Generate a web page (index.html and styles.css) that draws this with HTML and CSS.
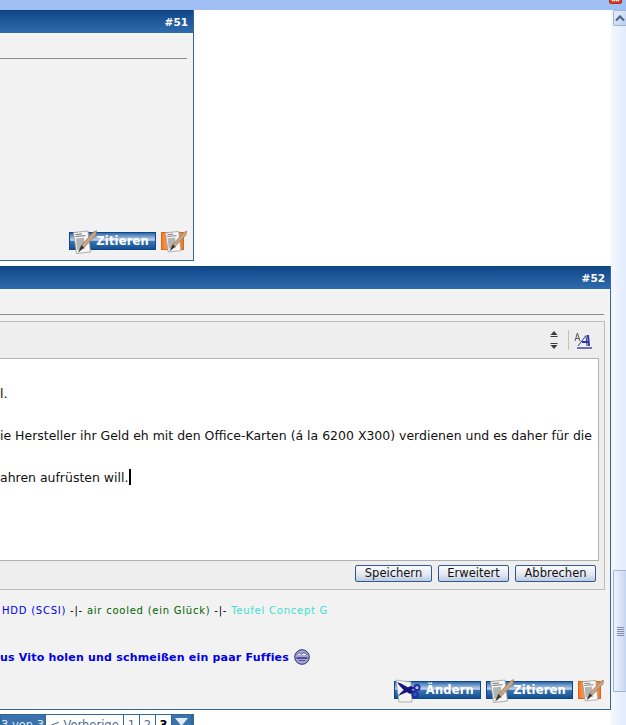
FILE: index.html
```html
<!DOCTYPE html>
<html lang="de">
<head>
<meta charset="utf-8">
<title>Forum</title>
<link rel="stylesheet" href="styles.css">
</head>
<body>
<svg class="defs" width="0" height="0" aria-hidden="true">
  <defs>
    <symbol id="doc" viewBox="0 0 24 24">
      <path d="M0.5 2.5 L15 1 L17.5 22 L3.5 23.5 Z" fill="#f6f6f6" stroke="#9a9a9a" stroke-width=".8"/>
      <path d="M2.5 4.5 L9 4 M2.5 6.5 L12.5 5.7" stroke="#777" stroke-width="1"/>
      <path d="M3 8.5 L11 7.8 L11.8 19 L4 19.7 Z" fill="#b4b4b4"/>
      <path d="M5.5 22 L8.5 15 L20 2.5 L23.5 0.5 L23 5 L11 17.5 Z" fill="#c9a480" stroke="#85705c" stroke-width=".6"/>
      <path d="M5.5 22 L8.5 15 L11 17.5 Z" fill="#333"/>
    </symbol>
    <symbol id="scissors" viewBox="0 0 26 24">
      <path d="M1 1 L16 3 L17 23 L4 23 Z" fill="#f2f2f2" stroke="#999" stroke-width=".7"/>
      <path d="M2 3 C8 5 14 9 19 13 L15 15 C9 12 5 8 2 3 Z" fill="#14147e"/>
      <path d="M3 17 C8 15 14 12 20 9 L16 7 C10 9 6 13 3 17 Z" fill="#14147e"/>
      <circle cx="22" cy="8.5" r="2.6" fill="none" stroke="#2424a8" stroke-width="1.8"/>
      <circle cx="20" cy="15.5" r="2.6" fill="none" stroke="#2424a8" stroke-width="1.8"/>
    </symbol>
  </defs>
</svg>

<div class="topbar"><span class="close"><svg width="11" height="11" viewBox="0 0 11 11"><path d="M2 6 L5 9 M5 6 L2 9 M6 6 L9 9 M9 6 L6 9" stroke="#fff" stroke-width="1.2"/></svg></span></div>

<div class="window">
  <main class="content">
    <article class="post post-short">
      <header class="post-head">#51</header>
      <div class="post-body">
        <hr class="rule rule-a">
        <div class="spacer"></div>
        <div class="actions">
          <a class="imgbtn"><svg class="ico"><use href="#doc"/></svg>Zitieren</a>
          <a class="mqbtn"><span class="mqbox"></span><svg class="ico-mq"><use href="#doc"/></svg></a>
        </div>
      </div>
    </article>

    <article class="post post-long">
      <header class="post-head">#52</header>
      <div class="post-body">
        <hr class="rule rule-b">
        <section class="editor">
          <div class="toolbar">
            <svg class="updown" width="8" height="18" viewBox="0 0 8 18"><path d="M4 0 L7.5 4 H.5 Z M.5 5 H7.5 V6 H.5 Z M.5 12 H7.5 V13 H.5 Z M.5 14 H7.5 L4 18 Z" fill="#3c3c3c"/></svg>
            <span class="tool-sep"></span>
            <svg class="fontsize" width="18" height="17" viewBox="0 0 18 17">
              <path d="M3.4 1 L6 9 M3.4 1 L1 9 M2 6.5 H5" stroke="#555" stroke-width="1" fill="none"/>
              <path d="M4 14 L12 3.5 L13 14" stroke="#3a3aa0" stroke-width="1" fill="none"/>
              <path d="M14 3 L15 14 M8 10 H14.5" stroke="#3434a0" stroke-width="2" fill="none"/>
              <path d="M3 16 H18" stroke="#3a3aa0" stroke-width="1.4"/>
            </svg>
          </div>
          <div class="textarea">
            <p class="line">l.</p>
            <p class="line">&nbsp;</p>
            <p class="line">ie Hersteller ihr Geld eh mit den Office-Karten (á la 6200 X300) verdienen und es daher für die</p>
            <p class="line">&nbsp;</p>
            <p class="line">ahren aufrüsten will.<span class="caret"></span></p>
          </div>
          <div class="editor-foot">
            <button class="btn btn-save">Speichern</button>
            <button class="btn btn-adv">Erweitert</button>
            <button class="btn btn-cancel">Abbrechen</button>
          </div>
        </section>
        <p class="signature"><span class="c-blue">HDD (SCSI)</span> -|- <span class="c-green">air cooled (ein Glück)</span> -|- <span class="c-turq">Teufel Concept G</span></p>
        <p class="shout">us Vito holen und schmeißen ein paar Fuffies
          <svg class="smiley" width="16" height="16" viewBox="0 0 16 16">
            <circle cx="8" cy="8" r="7.3" fill="#a3a3e6" stroke="#2d2d55" stroke-width="1"/>
            <path d="M3 6 C4 3.5 6 3.5 7 5.5 C9 3.5 11 3.5 13 6" fill="#fff" stroke="#2d2d55" stroke-width=".8"/>
            <path d="M2.5 9 H13.5" stroke="#1c1c3c" stroke-width="1.2"/>
            <path d="M4.5 11.5 H11.5" stroke="#55558c" stroke-width="1"/>
          </svg>
        </p>
        <div class="spacer"></div>
        <div class="actions">
          <a class="imgbtn imgbtn-edit"><svg class="ico ico-sc"><use href="#scissors"/></svg>Ändern</a>
          <a class="imgbtn"><svg class="ico"><use href="#doc"/></svg>Zitieren</a>
          <a class="mqbtn"><span class="mqbox"></span><svg class="ico-mq"><use href="#doc"/></svg></a>
        </div>
      </div>
    </article>

    <nav class="pager">
      <span class="pg pg-info">3 von 3</span>
      <a class="pg pg-prev">&lt; Vorherige</a>
      <a class="pg pg-n">1</a>
      <a class="pg pg-n">2</a>
      <b class="pg pg-n pg-cur">3</b>
      <span class="pg pg-menu"><svg width="13" height="8" viewBox="0 0 13 8"><path d="M0 0 H13 L6.5 8 Z" fill="#e4ecf6"/></svg></span>
    </nav>
  </main>

  <aside class="scrollbar">
    <div class="sb-up"><svg width="10" height="7" viewBox="0 0 10 7"><path d="M1 5.5 L5 1.5 L9 5.5" fill="none" stroke="#4d6185" stroke-width="2"/></svg></div>
    <div class="sb-thumb"><span class="grip"></span></div>
  </aside>
</div>
</body>
</html>
```

FILE: styles.css
```css
* { box-sizing: border-box; }
html, body { margin: 0; padding: 0; height: 725px; overflow: hidden; background: #fff; }
body { font-family: "DejaVu Sans", Verdana, sans-serif; color: #000; position: relative; }
.defs { position: absolute; }

.topbar { height: 10px; background: #a0bff5; position: relative; }
.close { position: absolute; left: 609px; top: -9px; width: 13px; height: 13px; background: #d8402a; border: 1px solid #b02c18; border-radius: 2px; overflow: hidden; }
.close svg { display: block; }

.window { display: flex; height: 715px; }
.content { width: 611px; overflow: hidden; flex: none; }

.post { border-right: 1px solid #336699; border-bottom: 1px solid #336699; display: flex; flex-direction: column; }
.post-short { width: 194px; height: 251px; margin-bottom: 5px; }
.post-long { width: 611px; height: 444px; margin-bottom: 4px; }

.post-head { height: 23px; flex: none; background: linear-gradient(#12478a, #2f6cae); color: #fff; font: bold 10.5px/22px "DejaVu Sans", sans-serif; text-align: right; padding-right: 5px; border-top: 1px solid #0f3f7c; }
.post-body { flex: 1; background: #f2f2f2; display: flex; flex-direction: column; border-top: 3px solid #f5f5f5; min-height: 0; }

.rule { border: 0; height: 1px; background: #8c8c8c; margin: 0; flex: none; }
.rule-a { width: 187px; margin-top: 22px; }
.rule-b { width: 604px; margin-top: 22px; }
.spacer { flex: 1; }

.actions { display: flex; justify-content: flex-end; gap: 5px; padding: 0 6px 10px 0; height: 29px; align-items: flex-start; flex: none; }
.imgbtn { position: relative; width: 87px; height: 18px; background: linear-gradient(#2d68ab 0, #c6d6ea 45%, #3a74b4 52%, #14508f 100%); border: 1px solid #0d468f; color: #fff; font: bold 11.5px/16px "DejaVu Sans", sans-serif; text-align: right; padding-right: 6px; letter-spacing: .2px; margin-top: 1px; }
.imgbtn-edit { padding-right: 6px; }
.ico { position: absolute; left: 3px; top: -3px; width: 24px; height: 24px; }
.ico-sc { left: 0; width: 26px; }
.mqbtn { position: relative; width: 26px; height: 24px; flex: none; }
.mqbox { position: absolute; left: 0; top: 1px; width: 23px; height: 18px; background: linear-gradient(90deg, #f07a28, #f9b37c 45%, #f07a28); border: 1px solid #e2660f; }
.ico-mq { position: absolute; left: 4px; top: -1px; width: 22px; height: 23px; }

.editor { width: 605px; height: 269px; margin-top: 6px; border: 1px solid #bcbcbc; border-left: 0; background: #eee; display: flex; flex-direction: column; flex: none; }
.toolbar { height: 36px; display: flex; justify-content: flex-end; align-items: center; padding-right: 12px; flex: none; }
.updown { margin-right: 10px; }
.tool-sep { width: 1px; height: 20px; background: #c4c4b4; margin-right: 5px; }
.fontsize { display: block; }

.textarea { height: 203px; width: 599px; flex: none; background: #fff; border: 1px solid #b0b0b0; border-left: 0; padding-top: 24px; font-size: 12.48px; line-height: 21px; color: #111; overflow: hidden; }
.line { margin: 0; white-space: nowrap; }
.caret { display: inline-block; width: 2px; height: 16px; background: #000; vertical-align: -3px; margin-left: 1px; }

.editor-foot { flex: 1; display: flex; justify-content: flex-end; gap: 6px; padding: 4px 8px 0 0; }
.btn { height: 17px; padding: 0; font: 11.5px/15px "DejaVu Sans", sans-serif; color: #111; background: linear-gradient(#fafbfd, #e4e9f2 55%, #bccbe2); border: 1px solid #33598c; border-radius: 2px; text-align: center; }
.btn-save { width: 77px; }
.btn-adv { width: 71px; }
.btn-cancel { width: 81px; }

.signature { margin: 14px 0 0 2px; font-size: 10px; line-height: 14px; letter-spacing: .76px; white-space: nowrap; flex: none; }
.c-blue { color: #0000ee; }
.c-green { color: #006400; }
.c-turq { color: #40e0d0; }

.shout { margin: 31px 0 0; font-size: 11px; font-weight: bold; line-height: 16px; color: #0000e6; white-space: nowrap; flex: none; letter-spacing: .2px; }
.smiley { vertical-align: -4px; margin-left: 1px; }

.pager { display: flex; width: 194px; height: 20px; background: #336699; padding: 1px; gap: 1px; font-size: 11.5px; line-height: 21px; color: #4a6a96; white-space: nowrap; }
.pg { flex: none; height: 18px; text-align: center; background: #fff; }
.pg-info { width: 44px; background: #3a72ac; color: #dfe8f3; text-align: right; padding-right: 2px; overflow: hidden; }
.pg-prev { width: 77px; }
.pg-n { width: 15px; }
.pg-cur { color: #000; }
.pg-menu { width: 19px; background: #3a72ac; }
.pg-menu svg { display: block; margin: 3px auto 0; }

.scrollbar { flex: 1; background: linear-gradient(90deg, #f3f7ff, #e3ecfd); display: flex; flex-direction: column; padding: 0 0 0 2px; }
.sb-up { height: 16px; background: linear-gradient(135deg, #e8f0fd, #b9cdee); border: 1px solid #9fb5d8; border-right: 0; border-radius: 2px 0 0 2px; display: flex; align-items: center; justify-content: center; flex: none; }
.sb-thumb { margin-top: 544px; height: 122px; border: 1px solid #9fb5d8; border-right: 0; border-radius: 2px 0 0 2px; background: linear-gradient(90deg, #eef4fe, #c5d6f3); display: flex; align-items: center; justify-content: center; flex: none; }
.grip { width: 7px; height: 9px; background: repeating-linear-gradient(#7d8fb0 0, #7d8fb0 1px, transparent 1px, transparent 2px); }
```
